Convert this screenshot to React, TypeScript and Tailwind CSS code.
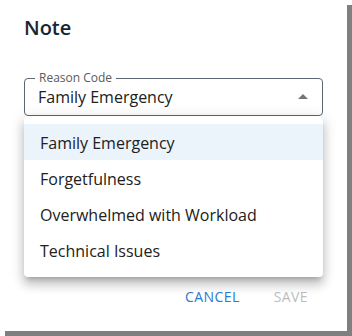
import React from "react";

const items = ["Family Emergency", "Forgetfulness", "Overwhelmed with Workload", "Technical Issues"];

export default function App() {
  return (
    <div className="w-[352px] h-[336px] bg-white font-['Open_Sans',sans-serif]">
      <div className="w-[347px] h-[331px] bg-white shadow-[5px_5px_0_#808080] flex flex-col">
        <div className="px-6 pt-[14px]">
          <h2 className="text-[20px] leading-[28px] font-semibold text-[#1d2330]">Note</h2>
        </div>
        <div className="px-6 mt-[36px]">
          <div className="relative h-[38px] rounded-[4px] border border-[#5c6675]">
            <span className="absolute left-[10px] -top-[9px] px-[4px] bg-white text-[12px] leading-[16px] text-[#5a5a5a]">
              Reason Code
            </span>
            <div className="pl-[13px] pt-[6px] text-[16px] leading-[24px] text-[#202020]">Family Emergency</div>
            <svg className="absolute right-[14px] top-[15px]" width="10" height="5" viewBox="0 0 10 5">
              <path d="M0 5 L5 0 L10 5 Z" fill="#757575" />
            </svg>
            <div className="absolute left-[-1px] right-[-1px] top-[37px] z-10 rounded-[4px] bg-white pt-2 pb-[9px] shadow-[0_5px_5px_-3px_rgba(0,0,0,0.2),0_8px_10px_1px_rgba(0,0,0,0.14),0_3px_14px_2px_rgba(0,0,0,0.12)]">
              {items.map((t, i) => (
                <div
                  key={t}
                  className={
                    "h-[36px] flex items-center px-4 pt-[1px] text-[16px] leading-[24px] text-[#212121] " +
                    (i === 0 ? "bg-[#ebf3fb]" : "")
                  }
                >
                  {t}
                </div>
              ))}
            </div>
          </div>
        </div>
        <div className="mt-[171px] flex justify-end gap-[34px] pr-[39px] text-[14px] leading-[20px] font-medium tracking-[0.03em]">
          <span className="text-[#2a7ad3]">CANCEL</span>
          <span className="text-[#bdbdbd]">SAVE</span>
        </div>
      </div>
    </div>
  );
}
